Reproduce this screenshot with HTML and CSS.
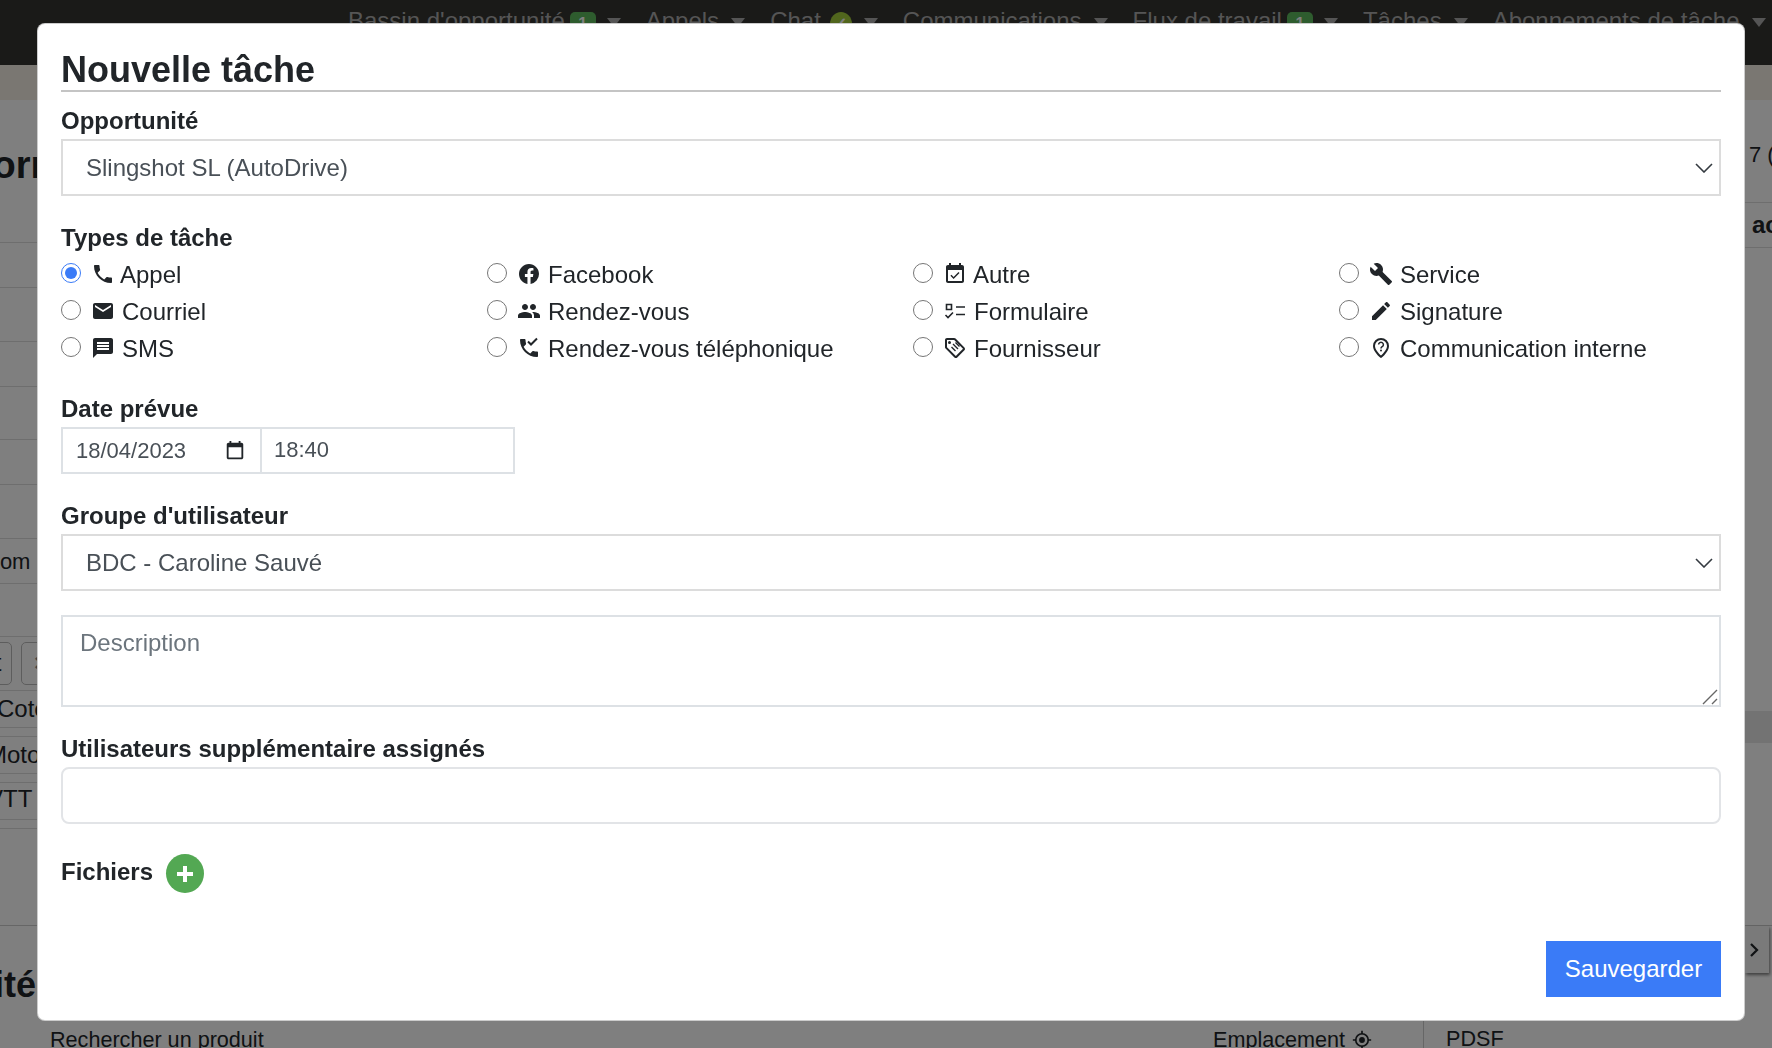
FILE: index.html
```html
<!DOCTYPE html>
<html lang="fr">
<head>
  <meta charset="UTF-8">
  <meta name="viewport" content="width=device-width, initial-scale=1.0">
  <title>Nouvelle tâche</title>
  <link rel="stylesheet" href="styles.css">
</head>
<body>
  <!-- page behind the dialog -->
  <div class="page">
    <nav class="navbar">
      <span class="nav-item">Bassin d'opportunité <b class="badge">1</b><i class="caret"></i></span>
      <span class="nav-item">Appels<i class="caret"></i></span>
      <span class="nav-item">Chat <b class="badge badge-round">✓</b><i class="caret"></i></span>
      <span class="nav-item">Communications<i class="caret"></i></span>
      <span class="nav-item">Flux de travail <b class="badge">1</b><i class="caret"></i></span>
      <span class="nav-item">Tâches<i class="caret"></i></span>
      <span class="nav-item">Abonnements de tâche<i class="caret"></i></span>
    </nav>
    <div class="band"></div>

    <div class="content">
      <div class="left-col">
        <h2 class="left-title">Information</h2>
        <div class="row"></div>
        <div class="row row-tall"></div>
        <div class="row"></div>
        <div class="row row-tall"></div>
        <div class="row"></div>
        <div class="row row-tall"></div>
        <div class="row"><span class="clip-text">Nom</span></div>
        <div class="row row-tall"></div>
        <div class="row row-tall row-buttons">
          <span class="mini-btn mini-btn-first">t</span>
          <span class="mini-btn mini-x">×</span>
        </div>
        <div class="row row-item"><span class="item-cote">Cote</span></div>
        <div class="row row-gap"></div>
        <div class="row row-item"><span class="item-moto">Moto</span></div>
        <div class="row row-gap"></div>
        <div class="row row-item"><span class="item-vtt">VTT</span></div>
        <div class="row row-gap"></div>
      </div>
      <div class="right-col">
        <div class="right-first">7 (</div>
        <div class="right-head">ac</div>
        <div class="right-stripe"></div>
      </div>
    </div>

    <div class="section">
      <h2 class="section-title">Quantité</h2>
      <span class="next-btn">
        <svg viewBox="0 0 24 24" width="20" height="20"><path d="M8 4l8 8-8 8" fill="none" stroke="#212529" stroke-width="3"/></svg>
      </span>
    </div>

    <div class="product-head">
      <span class="product-search">Rechercher un produit</span>
      <span class="product-place">Emplacement
        <svg viewBox="0 0 24 24" width="20" height="20"><circle cx="12" cy="12" r="7.5" fill="none" stroke="#212529" stroke-width="2"/><circle cx="12" cy="12" r="3.5" fill="#212529"/><path d="M12 1v4M12 19v4M1 12h4M19 12h4" stroke="#212529" stroke-width="2"/></svg>
      </span>
      <span class="product-price">PDSF</span>
    </div>
  </div>

  <div class="backdrop"></div>

  <div class="modal">
    <h1 class="modal-title">Nouvelle tâche</h1>

    <label class="form-label first-label">Opportunité</label>
    <div class="select-box">
      <span>Slingshot SL (AutoDrive)</span>
      <svg class="chevron" viewBox="0 0 18 10" width="18" height="10"><path d="M1 1l8 8 8-8" fill="none" stroke="#343a40" stroke-width="1.6"/></svg>
    </div>

    <label class="form-label">Types de tâche</label>
    <div class="task-types">
      <label class="task-type type-appel">
        <input type="radio" name="type" checked>
        <svg class="ico" viewBox="0 0 24 24"><path d="M6.62 10.79c1.44 2.83 3.76 5.14 6.59 6.59l2.2-2.2c.27-.27.67-.36 1.02-.24 1.12.37 2.33.57 3.57.57.55 0 1 .45 1 1V20c0 .55-.45 1-1 1-9.39 0-17-7.61-17-17 0-.55.45-1 1-1h3.5c.55 0 1 .45 1 1 0 1.25.2 2.45.57 3.57.11.35.03.74-.25 1.02l-2.2 2.2z"/></svg>
        <span>Appel</span>
      </label>
      <label class="task-type">
        <input type="radio" name="type">
        <svg class="ico" viewBox="0 0 24 24"><path d="M12 2.04C6.5 2.04 2 6.53 2 12.06C2 17.06 5.66 21.21 10.44 21.96V14.96H7.9V12.06H10.44V9.85C10.44 7.34 11.93 5.96 14.22 5.96C15.31 5.96 16.45 6.15 16.45 6.15V8.62H15.19C13.95 8.62 13.56 9.39 13.56 10.18V12.06H16.34L15.89 14.96H13.56V21.96A10 10 0 0 0 22 12.06C22 6.53 17.5 2.04 12 2.04Z"/></svg>
        <span>Facebook</span>
      </label>
      <label class="task-type type-autre">
        <input type="radio" name="type">
        <svg class="ico" viewBox="0 0 24 24"><path d="M19 3h-1V1h-2v2H8V1H6v2H5c-1.11 0-2 .9-2 2v14c0 1.1.89 2 2 2h14c1.1 0 2-.9 2-2V5c0-1.1-.9-2-2-2zm0 16H5V8h14v11z"/><path d="M16.53 11.06L15.47 10l-4.88 4.88-2.12-2.12-1.06 1.06L10.59 17l5.94-5.94z"/></svg>
        <span>Autre</span>
      </label>
      <label class="task-type">
        <input type="radio" name="type">
        <svg class="ico" viewBox="0 0 24 24"><path d="M22.7 19l-9.1-9.1c.9-2.3.4-5-1.5-6.9-2-2-5-2.4-7.4-1.3L9 6 6 9 1.6 4.7C.4 7.1.9 10.1 2.9 12.1c1.9 1.9 4.6 2.4 6.9 1.5l9.1 9.1c.4.4 1 .4 1.4 0l2.3-2.3c.5-.4.5-1.1.1-1.4z"/></svg>
        <span>Service</span>
      </label>

      <label class="task-type">
        <input type="radio" name="type">
        <svg class="ico" viewBox="0 0 24 24"><path d="M20 4H4c-1.1 0-1.99.9-1.99 2L2 18c0 1.1.9 2 2 2h16c1.1 0 2-.9 2-2V6c0-1.1-.9-2-2-2zm0 4l-8 5-8-5V6l8 5 8-5v2z"/></svg>
        <span>Courriel</span>
      </label>
      <label class="task-type">
        <input type="radio" name="type">
        <svg class="ico" viewBox="0 0 24 24"><path d="M16 11c1.66 0 2.99-1.34 2.99-3S17.66 5 16 5c-1.66 0-3 1.34-3 3s1.34 3 3 3zm-8 0c1.66 0 2.99-1.34 2.99-3S9.66 5 8 5C6.34 5 5 6.34 5 8s1.34 3 3 3zm0 2c-2.33 0-7 1.17-7 3.5V19h14v-2.5c0-2.33-4.67-3.5-7-3.5zm8 0c-.29 0-.62.02-.97.05 1.16.84 1.97 1.97 1.97 3.45V19h6v-2.5c0-2.33-4.67-3.5-7-3.5z"/></svg>
        <span>Rendez-vous</span>
      </label>
      <label class="task-type">
        <input type="radio" name="type">
        <svg class="ico" viewBox="0 0 24 24"><g fill="none" stroke="#212529" stroke-width="1.6"><path d="M3.5 5.5h5v5h-5z"/><path d="M13 8h9M13 15.5h9"/><path d="M2.5 16l2.5 2.5 5-5"/></g></svg>
        <span>Formulaire</span>
      </label>
      <label class="task-type">
        <input type="radio" name="type">
        <svg class="ico" viewBox="0 0 24 24"><path d="M3 17.25V21h3.75L17.81 9.94l-3.75-3.75L3 17.25zM20.71 7.04c.39-.39.39-1.02 0-1.41l-2.34-2.34c-.39-.39-1.02-.39-1.41 0l-1.83 1.83 3.75 3.75 1.83-1.83z"/></svg>
        <span>Signature</span>
      </label>

      <label class="task-type">
        <input type="radio" name="type">
        <svg class="ico" viewBox="0 0 24 24"><path d="M20 2H4c-1.1 0-1.99.9-1.99 2L2 22l4-4h14c1.1 0 2-.9 2-2V4c0-1.1-.9-2-2-2zm-2 12H6v-2h12v2zm0-3H6V9h12v2zm0-3H6V6h12v2z"/></svg>
        <span>SMS</span>
      </label>
      <label class="task-type">
        <input type="radio" name="type">
        <svg class="ico" viewBox="0 0 24 24"><path d="M6.62 10.79c1.44 2.83 3.76 5.14 6.59 6.59l2.2-2.2c.27-.27.67-.36 1.02-.24 1.12.37 2.33.57 3.57.57.55 0 1 .45 1 1V20c0 .55-.45 1-1 1-9.39 0-17-7.61-17-17 0-.55.45-1 1-1h3.5c.55 0 1 .45 1 1 0 1.25.2 2.45.57 3.57.11.35.03.74-.25 1.02l-2.2 2.2z"/><path d="M11 5.5l3 3 6-6" fill="none" stroke="#212529" stroke-width="2"/></svg>
        <span>Rendez-vous téléphonique</span>
      </label>
      <label class="task-type">
        <input type="radio" name="type">
        <svg class="ico" viewBox="0 0 24 24"><path d="M21.41 11.41l-8.83-8.83C12.21 2.21 11.7 2 11.17 2H4c-1.1 0-2 .9-2 2v7.17c0 .53.21 1.04.59 1.41l8.83 8.83c.78.78 2.05.78 2.83 0l7.17-7.17c.78-.78.78-2.04-.01-2.83zM12.83 20L4 11.17V4h7.17L20 12.83 12.83 20z"/><circle cx="6.5" cy="6.5" r="1.5"/><path d="M10 8l5 5M8.5 11l4 4M12.5 6.5l4 4" fill="none" stroke="#212529" stroke-width="1.4"/></svg>
        <span>Fournisseur</span>
      </label>
      <label class="task-type">
        <input type="radio" name="type">
        <svg class="ico" viewBox="0 0 24 24"><path d="M12 2a8 8 0 0 0-8 8c0 5.2 6.2 11 8 12 1.8-1 8-6.8 8-12a8 8 0 0 0-8-8zm0 17.6C9.8 17.6 6 13.4 6 10a6 6 0 0 1 12 0c0 3.4-3.8 7.6-6 9.6z"/><path d="M9.6 8.6a2.4 2.4 0 1 1 3.6 2.1c-.8.5-1.2.9-1.2 1.8" fill="none" stroke="#212529" stroke-width="1.5"/><circle cx="12" cy="14.6" r="1"/></svg>
        <span>Communication interne</span>
      </label>
    </div>

    <label class="form-label tight-label">Date prévue</label>
    <div class="date-group">
      <div class="date-box">
        <span>18/04/2023</span>
        <svg viewBox="0 0 24 24" width="22" height="22"><path d="M19 3h-1V1h-2v2H8V1H6v2H5c-1.11 0-2 .9-2 2v14c0 1.1.89 2 2 2h14c1.1 0 2-.9 2-2V5c0-1.1-.9-2-2-2zm0 16H5V8h14v11z"/></svg>
      </div>
      <div class="time-box">18:40</div>
    </div>

    <label class="form-label tight-label">Groupe d'utilisateur</label>
    <div class="select-box">
      <span>BDC - Caroline Sauvé</span>
      <svg class="chevron" viewBox="0 0 18 10" width="18" height="10"><path d="M1 1l8 8 8-8" fill="none" stroke="#343a40" stroke-width="1.6"/></svg>
    </div>

    <div class="description-wrap">
      <textarea class="description" placeholder="Description"></textarea>
      <svg class="grip" viewBox="0 0 16 16" width="16" height="16"><path d="M1 15L15 1M10 15l5-5" fill="none" stroke="#666" stroke-width="1.4"/></svg>
    </div>

    <label class="form-label tight-label users-label">Utilisateurs supplémentaire assignés</label>
    <input class="users-input" type="text">

    <div class="files-row">
      <span class="files-label">Fichiers</span>
      <span class="add-btn">
        <svg viewBox="0 0 20 20" width="20" height="20"><path d="M10 2v16M2 10h16" stroke="#fff" stroke-width="4"/></svg>
      </span>
    </div>

    <div class="modal-footer">
      <button class="save-btn">Sauvegarder</button>
    </div>
  </div>
</body>
</html>
```

FILE: styles.css
```css
* {
  box-sizing: border-box;
}

html, body {
  height: 100%;
}

body {
  margin: 0;
  overflow: hidden;
  font-family: "Liberation Sans", Arial, sans-serif;
  font-size: 24px;
  color: #212529;
  background: #fff;
}

.page {
  height: 1048px;
  overflow: hidden;
}

.navbar {
  display: flex;
  height: 65px;
  padding: 7px 0 0 348px;
  gap: 25px;
  background: #353431;
  color: #aaa;
  white-space: nowrap;
  line-height: 28px;
}

.nav-item {
  display: flex;
  align-items: flex-start;
}

.badge {
  width: 26px;
  height: 24px;
  margin: 5px -1px 0 5px;
  border-radius: 5px;
  background: #5cb85c;
  color: #fff;
  font-size: 16px;
  line-height: 24px;
  text-align: center;
}

.badge-round {
  width: 22px;
  margin: 5px 0 0 9px;
  border-radius: 50%;
  background: #a2cc3a;
}

.caret {
  width: 0;
  height: 0;
  margin: 11px 0 0 12px;
  border-left: 7px solid transparent;
  border-right: 7px solid transparent;
  border-top: 9px solid #aaa;
}

.band {
  height: 35px;
  background: #f5efe5;
}

.content {
  display: flex;
  justify-content: space-between;
  height: 826px;
  border-bottom: 1px solid #ccc;
}

.left-col {
  width: 37px;
  overflow: hidden;
}

.left-title {
  height: 143px;
  margin: 0 0 0 -54px;
  padding-top: 44px;
  font-size: 38px;
  line-height: 42px;
  border-bottom: 1px solid #ddd;
  white-space: nowrap;
}

.row {
  display: flex;
  align-items: center;
  height: 45px;
  border-bottom: 1px solid #ddd;
  white-space: nowrap;
}

.row-tall {
  height: 53.5px;
}

.row-item {
  height: 37px;
}

.row-gap {
  height: 9px;
}

.clip-text {
  margin: 2px 0 0 -16px;
  font-size: 22px;
}

.row-buttons {
  gap: 9px;
}

.mini-btn {
  display: flex;
  flex: none;
  align-items: center;
  justify-content: center;
  width: 40px;
  height: 43px;
  border: 1px solid #bbb;
  border-radius: 5px;
}

.mini-btn-first {
  margin-left: -28px;
  padding-left: 12px;
}

.mini-x {
  color: #888;
  font-weight: bold;
}

.item-cote {
  margin-left: -3px;
}

.item-moto {
  margin: 1px 0 0 -13px;
}

.item-vtt {
  margin: -3px 0 0 -13px;
}

.right-col {
  width: 27px;
  white-space: nowrap;
}

.right-first {
  height: 103px;
  padding: 41px 0 0 4px;
  font-size: 22px;
  line-height: 28px;
  border-bottom: 1px solid #ddd;
}

.right-head {
  height: 45px;
  padding-left: 7px;
  font-weight: bold;
  line-height: 44px;
  border-bottom: 1px solid #ddd;
}

.right-stripe {
  height: 32px;
  margin-top: 463px;
  background: #e6e6e6;
}

.section {
  display: flex;
  justify-content: space-between;
  align-items: flex-start;
  height: 95px;
}

.section-title {
  margin: 38px 0 0 -110px;
  font-size: 36px;
  line-height: 42px;
}

.next-btn {
  display: flex;
  align-items: center;
  justify-content: center;
  width: 24px;
  height: 47px;
  margin-right: 3px;
  padding-right: 6px;
  background: #f4f4f4;
  box-shadow: 1px 2px 3px rgba(0, 0, 0, 0.5);
}

.product-head {
  display: flex;
  align-items: center;
  height: 27px;
  padding-left: 50px;
  padding-top: 10px;
  font-size: 21.6px;
}

.product-search {
  width: 1163px;
}

.product-place {
  display: flex;
  align-items: center;
  gap: 7px;
  width: 210px;
}

.product-price {
  height: 40px;
  padding: 6px 0 0 22px;
  border-left: 1px solid #ccc;
}

.backdrop {
  position: fixed;
  inset: 0;
  background: rgba(0, 0, 0, 0.5);
}

.modal {
  position: fixed;
  left: 37px;
  top: 23px;
  width: 1708px;
  height: 998px;
  display: flex;
  flex-direction: column;
  padding: 25px 23px 23px;
  background: #fff;
  border: 1px solid rgba(0, 0, 0, 0.2);
  border-radius: 8px;
}

.modal-title {
  margin: 0;
  height: 43px;
  font-size: 36px;
  line-height: 42px;
  border-bottom: 2px solid #c4c4c4;
}

.form-label {
  display: block;
  margin: 28px 0 5px;
  font-weight: bold;
  line-height: 28px;
}

.first-label {
  margin: 15px 0 4px;
}

.tight-label {
  margin-bottom: 4px;
}

.select-box {
  display: flex;
  align-items: center;
  justify-content: space-between;
  height: 57px;
  padding: 0 6px 0 23px;
  border: 2px solid #dcdcdc;
  color: #495057;
}

.chevron {
  flex: none;
}

.task-types {
  display: grid;
  grid-template-columns: repeat(3, 426px) 1fr;
  grid-auto-rows: 37px;
  margin-top: -1px;
}

.task-type {
  display: flex;
  align-items: center;
  white-space: nowrap;
}

.task-type input {
  width: 20px;
  height: 20px;
  margin: -3px 0 0;
  accent-color: #3a7bf7;
}

.ico {
  flex: none;
  width: 24px;
  height: 24px;
  margin: -2px 7px 0 10px;
  fill: #212529;
}

.type-appel .ico {
  margin-right: 5px;
}

.type-autre .ico {
  margin-right: 6px;
}

.date-group {
  display: flex;
  width: 454px;
  height: 47px;
  color: #495057;
  font-size: 22px;
}

.date-box {
  display: flex;
  align-items: center;
  justify-content: space-between;
  width: 201px;
  padding: 0 14px 0 13px;
  border: 2px solid #dde1e5;
}

.date-box svg {
  fill: #212529;
}

.time-box {
  flex: 1;
  padding: 0 12px;
  line-height: 42px;
  border: 2px solid #dde1e5;
  border-left: 0;
}

.description-wrap {
  position: relative;
  margin-top: 24px;
}

.description {
  display: block;
  width: 100%;
  height: 92px;
  padding: 12px 17px;
  border: 2px solid #dde1e5;
  border-radius: 0;
  outline: 0;
  resize: none;
  font-family: inherit;
  font-size: 24px;
}

.description::placeholder {
  color: #6c757d;
  opacity: 1;
}

.grip {
  position: absolute;
  right: 3px;
  bottom: 2px;
}

.users-input {
  display: block;
  width: 100%;
  height: 57px;
  border: 2px solid #e2e4e7;
  border-radius: 8px;
  outline: 0;
}

.files-row {
  display: flex;
  align-items: center;
  gap: 13px;
  margin-top: 30px;
}

.files-label {
  margin-top: -4px;
  font-weight: bold;
  line-height: 28px;
}

.add-btn {
  display: flex;
  align-items: center;
  justify-content: center;
  width: 38px;
  height: 39px;
  border-radius: 50%;
  background: #53a853;
}

.modal-footer {
  display: flex;
  justify-content: flex-end;
  margin-top: auto;
}

.save-btn {
  width: 175px;
  height: 56px;
  border: 0;
  background: #3a7bf7;
  color: #fff;
  font-family: inherit;
  font-size: 24px;
}
```
